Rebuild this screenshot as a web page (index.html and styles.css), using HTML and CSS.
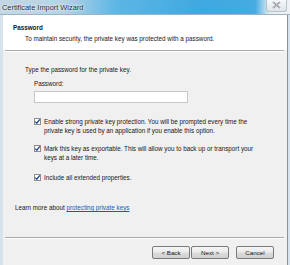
FILE: index.html
```html
<!DOCTYPE html>
<html lang="en">
<head>
  <meta charset="UTF-8">
  <meta name="viewport" content="width=device-width, initial-scale=1.0">
  <link rel="stylesheet" href="styles.css">
  <title>Certificate Import Wizard</title>
</head>
<body>
  <div class="window">
    <div class="titlebar">
      <span class="title">Certificate Import Wizard</span>
      <span class="close">
        <svg width="9" height="8" viewBox="0 0 9 8">
          <path d="M1 1 L8 7 M8 1 L1 7" stroke="#6d7378" stroke-width="1.6" fill="none"/>
          <path d="M1 1 L8 7 M8 1 L1 7" stroke="#f4f6f8" stroke-width="0.6" fill="none"/>
        </svg>
      </span>
    </div>
    <div class="dialog">
      <div class="header">
        <h2>Password</h2>
        <p>To maintain security, the private key was protected with a password.</p>
      </div>
      <div class="sep"></div>
      <div class="content">
        <p class="intro">Type the password for the private key.</p>
        <div class="field">
          <label>Password:</label>
          <input type="password" class="pw">
        </div>
        <div class="option first">
          <span class="box"></span>
          <span>Enable strong private key protection. You will be prompted every time the private key is used by an application if you enable this option.</span>
        </div>
        <div class="option">
          <span class="box"></span>
          <span>Mark this key as exportable. This will allow you to back up or transport your keys at a later time.</span>
        </div>
        <div class="option">
          <span class="box"></span>
          <span>Include all extended properties.</span>
        </div>
        <p class="learn">Learn more about <a href="#">protecting private keys</a></p>
      </div>
      <div class="sep"></div>
      <div class="footer">
        <button class="btn">&lt; Back</button>
        <button class="btn">Next &gt;</button>
        <button class="btn cancel">Cancel</button>
      </div>
    </div>
  </div>
</body>
</html>
```

FILE: styles.css
```css
body {
  margin: 0;
  width: 290px;
  height: 265px;
  overflow: hidden;
  font-family: 'Liberation Sans', Arial, sans-serif;
  font-size: 6.3px;
  color: #161616;
  background: #d6e3ec;
}

.window {
  height: 265px;
  display: flex;
  flex-direction: column;
}

.titlebar {
  height: 14px;
  display: flex;
  align-items: center;
  background: linear-gradient(to right, #c3d7e3 0%, #b6d3e6 22%, #5db6e4 40%, #3fa8e0 70%, #45abe1 88%, #e6eef3 93%, #eef2f5 100%);
  border-bottom: 1px solid #9fb3c2;
}

.title {
  padding-left: 2px;
  font-family: 'Liberation Sans', Arial, sans-serif;
  font-size: 7.4px;
  color: #1d2730;
  text-shadow: 0 0 3px #ffffff, 0 0 2px #ffffff;
}

.close {
  margin-left: auto;
  margin-right: 3px;
  width: 19px;
  height: 11px;
  margin-top: -3px;
  display: flex;
  align-items: center;
  justify-content: center;
  border: 1px solid #b8c2ca;
  border-top: none;
  border-radius: 0 0 3px 3px;
  background: linear-gradient(#f6f8fa, #dfe5ea);
}

.dialog {
  flex: 1;
  display: flex;
  flex-direction: column;
  margin-left: 3px;
  margin-right: 2px;
  border-right: 1px solid #8d9196;
  background: #f0f0f0;
}

.header {
  height: 35px;
  background: #fff;
  padding: 8px 0 0 10px;
  box-sizing: border-box;
}

.header h2 {
  margin: 0;
  font-size: 6.3px;
  line-height: 9px;
  font-weight: bold;
}

.header p {
  margin: 2px 0 0 12px;
  line-height: 9px;
}

.sep {
  height: 0;
  margin: 0 3px 0 2px;
  border-top: 1px solid #a9a9a9;
  border-bottom: 1px solid #fff;
}

.content {
  flex: 1;
  padding: 13px 0 0 22px;
  line-height: 9px;
}

.content p {
  margin: 0;
}

.field {
  display: flex;
  flex-direction: column;
  margin: 5px 0 0 9px;
}

.pw {
  width: 154px;
  height: 12px;
  box-sizing: border-box;
  margin: 3px 0 0 0;
  padding: 0;
  border: 1px solid #c4c8cc;
  background: #fff;
}

.option {
  display: flex;
  align-items: flex-start;
  gap: 3px;
  width: 222px;
  margin: 9px 0 0 9px;
}

.option.first {
  margin-top: 14px;
}

.option:last-of-type {
  margin-top: 11px;
}

.box {
  flex: none;
  width: 7px;
  height: 7px;
  margin-top: 1px;
  box-sizing: border-box;
  border: 1px solid #8f8f8f;
  background: #fff url("data:image/svg+xml,%3Csvg xmlns='http://www.w3.org/2000/svg' viewBox='0 0 7 7'%3E%3Cpath d='M1.2 3.6 L2.8 5.2 L5.8 1.4' stroke='%23214b8f' stroke-width='1.3' fill='none'/%3E%3C/svg%3E") center / 7px 7px no-repeat;
}

.learn {
  margin: 21px 0 0 -10px !important;
}

.learn a {
  color: #0a5fc4;
}

.footer {
  height: 26px;
  display: flex;
  align-items: flex-start;
  justify-content: flex-end;
  gap: 1px;
  padding: 7px 13px 0 0;
  box-sizing: border-box;
}

.btn {
  width: 38px;
  height: 13px;
  padding: 0;
  font-family: 'Liberation Sans', Arial, sans-serif;
  font-size: 6.2px;
  color: #161616;
  border: 1px solid #7a7a7a;
  border-radius: 2px;
  background: linear-gradient(#f4f4f4 0%, #ebebeb 48%, #dcdcdc 52%, #d0d0d0 100%);
}

.btn.cancel {
  margin-left: 6px;
}
```
